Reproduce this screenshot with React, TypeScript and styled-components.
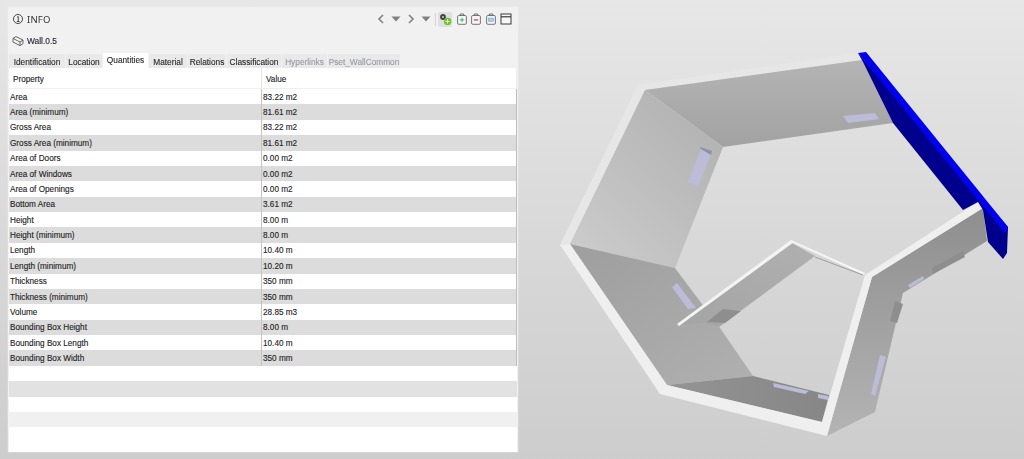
import React from "react";
import styled, { createGlobalStyle } from "styled-components";

const Global = createGlobalStyle`
  html, body { margin: 0; padding: 0; overflow: hidden; }
  body { font-family: "Liberation Sans", Arial, sans-serif; }
`;

const Page = styled.div`
  width: 1024px;
  height: 459px;
  display: flex;
  overflow: hidden;
  background: linear-gradient(180deg, #e7e7e7 0%, #d9d9d9 50%, #cdcdcd 100%);
`;

const Panel = styled.section`
  width: 510px;
  height: 445px;
  margin: 7px 0 0 8px;
  flex: none;
  display: flex;
  flex-direction: column;
  background: #f1f1f1;
  box-shadow: 0 0 1px #fafafa;
  color: #222;
  filter: blur(0.3px);
`;

const TitleBar = styled.header`
  height: 24px;
  display: flex;
  align-items: center;
  padding: 0 4px 0 4px;
`;

const Title = styled.h1`
  margin: 0 0 0 3px;
  font-family: "Noto Sans", "Liberation Sans", sans-serif;
  font-size: 9.5px;
  font-weight: 400;
  letter-spacing: 0.2px;
  color: #333;
`;

const Tools = styled.div`
  margin-left: auto;
  display: flex;
  align-items: center;
`;

const ToolSlot = styled.span<{ $w: number; $active?: boolean }>`
  width: ${(p) => p.$w}px;
  height: 15px;
  display: flex;
  align-items: center;
  justify-content: center;
  background: ${(p) => (p.$active ? "#dfdfdf" : "transparent")};
  border-radius: 2px;
`;

const Sep = styled.span`
  width: 1px;
  height: 13px;
  margin: 0 2px;
  background: #d4d4d4;
`;

const ElementRow = styled.div`
  height: 21px;
  padding-bottom: 1px;
  box-sizing: border-box;
  display: flex;
  align-items: center;
  gap: 3px;
  padding-left: 4px;
  font-size: 8.4px;
  color: #2a2a3a;
  -webkit-text-stroke: 0.15px #2a2a3a;
`;

const Tabs = styled.nav`
  height: 16px;
  display: flex;
  align-items: flex-end;
  gap: 1px;
  padding-left: 1px;
`;

const Tab = styled.button<{ $active?: boolean; $muted?: boolean; $w: number }>`
  width: ${(p) => p.$w}px;
  height: ${(p) => (p.$active ? 15 : 14)}px;
  border: 0;
  padding: ${(p) => (p.$active ? "0 0 1px" : "1px 0 0")};
  font-family: inherit;
  font-size: 8.3px;
  text-align: center;
  white-space: nowrap;
  overflow: hidden;
  background: ${(p) => (p.$active ? "#ffffff" : "#e9e9e9")};
  color: ${(p) => (p.$muted ? "#9a9aa8" : "#2a2a2a")};
  -webkit-text-stroke: 0.12px currentColor;
`;

const Table = styled.div`
  width: 508px;
  margin-left: 1px;
  flex: 1;
  background: #ffffff;
  display: flex;
  flex-direction: column;
  font-size: 8.2px;
  -webkit-text-stroke: 0.12px #222;
`;

const HeadRow = styled.div`
  height: 21px;
  flex: none;
  display: grid;
  grid-template-columns: 253px 1fr;
  align-items: center;
  border-bottom: 1px solid #f0f0f0;
  box-sizing: border-box;
  color: #222;
`;

const HeadCell = styled.div<{ $last?: boolean }>`
  height: 100%;
  display: flex;
  align-items: center;
  padding: 3px 0 0 4px;
  box-sizing: border-box;
  border-right: 1px solid ${(p) => (p.$last ? "#eeeeee" : "#e4e4e4")};
`;

const Row = styled.div<{ $bg: string; $h?: number }>`
  height: ${(p) => p.$h ?? 15.39}px;
  flex: none;
  display: grid;
  grid-template-columns: 253px 1fr;
  align-items: center;
  background: ${(p) => p.$bg};
`;

const Cell = styled.div<{ $divided?: boolean }>`
  height: 100%;
  box-sizing: border-box;
  display: flex;
  align-items: center;
  padding: 1px 0 0 1px;
  border-right: 1px solid ${(p) => (p.$divided ? "#bdbdbd" : "#c4c4c4")};
  white-space: nowrap;
  overflow: hidden;
`;

const Viewport = styled.main`
  flex: 1;
  height: 459px;
`;

const Scene = styled.svg`
  display: block;
  width: 100%;
  height: 100%;
  filter: blur(0.25px);
`;

const rows: [string, string][] = [
  ["Area", "83.22 m2"],
  ["Area (minimum)", "81.61 m2"],
  ["Gross Area", "83.22 m2"],
  ["Gross Area (minimum)", "81.61 m2"],
  ["Area of Doors", "0.00 m2"],
  ["Area of Windows", "0.00 m2"],
  ["Area of Openings", "0.00 m2"],
  ["Bottom Area", "3.61 m2"],
  ["Height", "8.00 m"],
  ["Height (minimum)", "8.00 m"],
  ["Length", "10.40 m"],
  ["Length (minimum)", "10.20 m"],
  ["Thickness", "350 mm"],
  ["Thickness (minimum)", "350 mm"],
  ["Volume", "28.85 m3"],
  ["Bounding Box Height", "8.00 m"],
  ["Bounding Box Length", "10.40 m"],
  ["Bounding Box Width", "350 mm"],
];

const tabs: { label: string; w: number; active?: boolean; muted?: boolean }[] = [
  { label: "Identification", w: 56 },
  { label: "Location", w: 36 },
  { label: "Quantities", w: 45, active: true },
  { label: "Material", w: 38 },
  { label: "Relations", w: 38 },
  { label: "Classification", w: 54 },
  { label: "Hyperlinks", w: 45, muted: true },
  { label: "Pset_WallCommon", w: 72, muted: true },
];

const emptyRows = [
  { bg: "#ffffff", h: 15.4 },
  { bg: "#e2e2e2", h: 15.4 },
  { bg: "#ffffff", h: 15.4 },
  { bg: "#f0f0f0", h: 15.4 },
];

const InfoIcon = () => (
  <svg width="12" height="12" viewBox="0 0 13 13" fill="none" stroke="#3c3c3c">
    <circle cx="6.5" cy="6.5" r="4.9" strokeWidth="1" />
    <path d="M5.4 4.6 L6.8 3.9 V9 M5.2 9.2 H8.2" strokeWidth="1" />
  </svg>
);

const WallIcon = () => (
  <svg width="12" height="12" viewBox="0 0 12 12" fill="#f4f4f4" stroke="#555" strokeWidth="0.9">
    <path d="M1 3.4 L4 1.6 L11 5 L11 8.6 L8 10.6 L1 7 Z" />
    <path d="M1 3.4 L8 7 L8 10.6 M8 7 L11 5" fill="none" />
  </svg>
);

const Chevron = ({ flip }: { flip?: boolean }) => (
  <svg width="8" height="10" viewBox="0 0 8 10" fill="none" stroke="#7d7d7d" strokeWidth="1.5">
    <path d={flip ? "M2 1 L6 5 L2 9" : "M6 1 L2 5 L6 9"} />
  </svg>
);

const Caret = () => (
  <svg width="10" height="6" viewBox="0 0 10 6" fill="#808080">
    <path d="M0.5 0.5 H9.5 L5 5.5 Z" />
  </svg>
);

const GearIcon = () => (
  <svg width="13" height="13" viewBox="0 0 13 13">
    <circle cx="4" cy="4" r="2.9" fill="#444" />
    <circle cx="4" cy="4" r="1" fill="#cfcfcf" />
    <circle cx="8.6" cy="8.4" r="3.7" fill="#6cc22e" />
    <path d="M8.6 6.2 V10.6 M6.4 8.4 H10.8" stroke="#e6f7d4" strokeWidth="1" />
  </svg>
);

const Clipboard = ({ kind }: { kind: "add" | "remove" | "save" }) => (
  <svg width="10" height="12" viewBox="0 0 11 13" fill="none">
    <path d="M3.6 2.8 V1 H7.4 V2.8" stroke="#555" strokeWidth="0.9" />
    <rect x="0.7" y="2.7" width="9.6" height="9.6" rx="1.2" fill="#f9f9f9" stroke="#555" strokeWidth="0.9" />
    {kind === "add" && <path d="M5.5 5 V10 M3 7.5 H8" stroke="#2fb56a" strokeWidth="1.1" />}
    {kind === "remove" && <path d="M3 7.5 H8" stroke="#e0465a" strokeWidth="1.5" />}
    {kind === "save" && <rect x="2.6" y="5.4" width="5.8" height="4" fill="#a4cdee" stroke="#6b9fcc" strokeWidth="0.5" />}
  </svg>
);

const WindowIcon = () => (
  <svg width="12" height="12" viewBox="0 0 12 12" fill="none" stroke="#3a3a3a">
    <rect x="1" y="1" width="10" height="10" fill="#f8f8f8" strokeWidth="1" />
    <path d="M1 3.8 H11" strokeWidth="1.2" />
  </svg>
);

const windows = [
  "701,149 711,155 698,186 688,182",
  "843,116 875,113 879,119 848,123",
  "672,287 677,283 696,308 688,309",
  "773,383 809,391 805,394 774,387",
  "818,394 828,396 828,400 818,398",
  "880,355 886,357 875,396 871,394",
  "908,285 923,276 924,279 910,288",
];

const darkWindows = [
  "707,322 723,309 741,311 725,323",
  "932,268 963,251 965,257 933,274",
  "895,301 903,304 897,323 890,321",
];

const Model = () => (
  <Scene viewBox="518 0 506 459" preserveAspectRatio="none">
    <defs>
      <linearGradient id="top" x1="0" y1="0" x2="0" y2="1">
        <stop offset="0" stopColor="#b4b4b4" />
        <stop offset="1" stopColor="#a2a2a2" />
      </linearGradient>
      <linearGradient id="left" x1="0.9" y1="0" x2="0" y2="1">
        <stop offset="0" stopColor="#b0b0b0" />
        <stop offset="1" stopColor="#cdcdcd" />
      </linearGradient>
      <linearGradient id="lower" x1="0" y1="0" x2="1" y2="1">
        <stop offset="0" stopColor="#9e9e9e" />
        <stop offset="1" stopColor="#b0b0b0" />
      </linearGradient>
      <linearGradient id="bottom" x1="0" y1="0" x2="1" y2="0">
        <stop offset="0" stopColor="#949494" />
        <stop offset="1" stopColor="#868686" />
      </linearGradient>
      <linearGradient id="right" x1="0" y1="0" x2="0" y2="1">
        <stop offset="0" stopColor="#8e8e8e" />
        <stop offset="1" stopColor="#b4b4b4" />
      </linearGradient>
      <linearGradient id="inner" x1="0" y1="1" x2="1" y2="0">
        <stop offset="0" stopColor="#a4a4a4" />
        <stop offset="1" stopColor="#b0b0b0" />
      </linearGradient>
    </defs>
    <polygon points="560,245 638,85 858,53 862,60 645,90 570,244" fill="#e6e6e6" />
    <polygon points="645,90 862,60 893,123 723,147" fill="url(#top)" />
    <polygon points="645,90 723,147 675,268 570,244" fill="url(#left)" />
    <polygon points="570,244 675,268 720,328 753,376 667,385" fill="url(#lower)" />
    <polygon points="667,385 753,376 829,395 822,422" fill="url(#bottom)" />
    <polygon points="872,277 983,208 987,241 903,293 875,412 827,436" fill="url(#right)" />
    {windows.map((p) => (
      <polygon key={p} points={p} fill="#bcbcd9" />
    ))}
    <polygon points="678,325 792,243 815,256 719,327 705,323" fill="url(#inner)" />
    <polygon points="700,147 701,149 711,155 712,151" fill="#8f8fa8" />
    {darkWindows.map((p) => (
      <polygon key={p} points={p} fill="#8e8e8e" />
    ))}
    <polygon points="677,324 791,240 794,242 679,326" fill="#f4f4f4" />
    <polygon points="791,240 865,273 864,275 793,243" fill="#f6f6f6" />
    <polyline points="815,257 863,275" fill="none" stroke="#777" strokeWidth="0.6" />
    <polygon points="560,245 570,244 667,385 822,422 865,275 978,202 983,208 872,277 827,436 660,394" fill="#efefef" />
    <polygon points="858,53 863,62 893,123 963,210 978,202 983,210 988,242 1003,259 1007,253 1008,227" fill="#00008c" />
    <polygon points="858,53 866,52 1008,227 1007,232 1004,232" fill="#0000ee" />
  </Scene>
);

export default function App() {
  return (
    <Page>
      <Global />
      <Panel>
        <TitleBar>
          <InfoIcon />
          <Title>INFO</Title>
          <Tools>
            <ToolSlot $w={15}><Chevron /></ToolSlot>
            <ToolSlot $w={15}><Caret /></ToolSlot>
            <ToolSlot $w={15}><Chevron flip /></ToolSlot>
            <ToolSlot $w={15}><Caret /></ToolSlot>
            <Sep />
            <ToolSlot $w={14} $active><GearIcon /></ToolSlot>
            <ToolSlot $w={2.5} />
            <ToolSlot $w={14.5}><Clipboard kind="add" /></ToolSlot>
            <ToolSlot $w={14.5}><Clipboard kind="remove" /></ToolSlot>
            <ToolSlot $w={14.5}><Clipboard kind="save" /></ToolSlot>
            <ToolSlot $w={16}><WindowIcon /></ToolSlot>
          </Tools>
        </TitleBar>
        <ElementRow>
          <WallIcon />
          <span>Wall.0.5</span>
        </ElementRow>
        <Tabs>
          {tabs.map((t) => (
            <Tab key={t.label} $w={t.w} $active={t.active} $muted={t.muted}>
              {t.label}
            </Tab>
          ))}
        </Tabs>
        <Table>
          <HeadRow>
            <HeadCell>Property</HeadCell>
            <HeadCell $last>Value</HeadCell>
          </HeadRow>
          {rows.map(([k, v], i) => (
            <Row key={k} $bg={i % 2 ? "#dcdcdc" : "#ffffff"}>
              <Cell>{k}</Cell>
              <Cell $divided>{v}</Cell>
            </Row>
          ))}
          {emptyRows.map((r, i) => (
            <Row key={i} $bg={r.bg} $h={r.h} />
          ))}
        </Table>
      </Panel>
      <Viewport>
        <Model />
      </Viewport>
    </Page>
  );
}
